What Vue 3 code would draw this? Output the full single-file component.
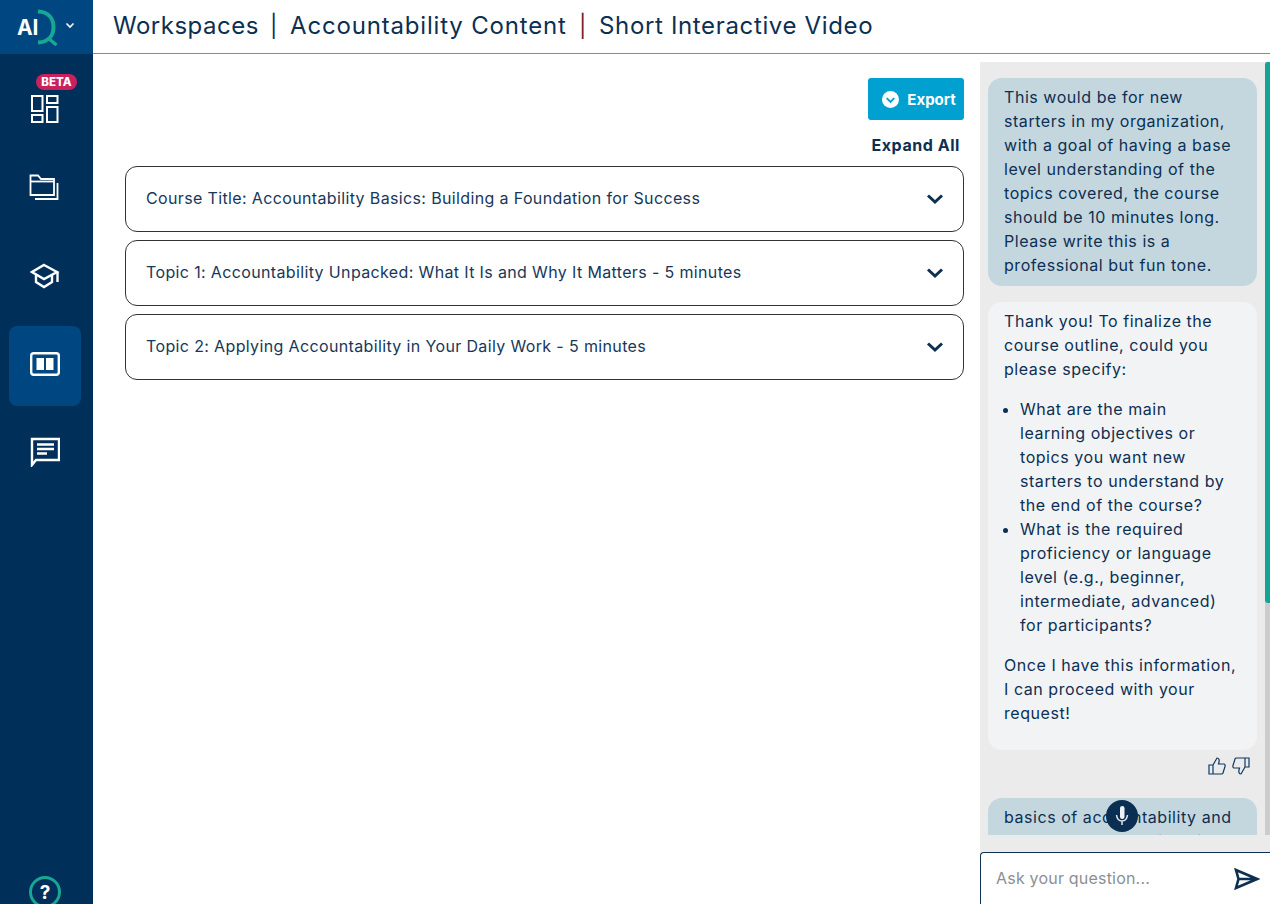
<script setup>
const items = [
  'Course Title: Accountability Basics: Building a Foundation for Success',
  'Topic 1: Accountability Unpacked: What It Is and Why It Matters - 5 minutes',
  'Topic 2: Applying Accountability in Your Daily Work - 5 minutes'
]
</script>

<template>
  <div class="app">
    <aside class="side">
      <div class="logo">
        <span class="ai">AI</span>
        <svg class="q" width="20" height="37" viewBox="0 0 20 37" fill="none">
          <path d="M0 2.500 C10 3 15.500 9 15.500 18 C15.500 27 10 33 0 33.500" stroke="#18a695" stroke-width="4"/>
          <path d="M10 29 L18.500 36" stroke="#18a695" stroke-width="3.500"/>
        </svg>
        <svg class="caret" width="10" height="7" viewBox="0 0 10 7" fill="none"><path d="M1.500 1.500 L5 5 L8.500 1.500" stroke="#fff" stroke-width="1.600"/></svg>
      </div>
      <nav class="nav">
        <div class="nav-item first">
          <span class="beta">BETA</span>
          <svg width="30" height="30" viewBox="0 0 30 30" fill="none" stroke="#fff" stroke-width="2">
            <rect x="2" y="2" width="10.500" height="15"/><rect x="17" y="2" width="10.500" height="7"/>
            <rect x="2" y="21" width="10.500" height="7"/><rect x="17" y="13" width="10.500" height="15"/>
          </svg>
        </div>
        <div class="nav-item">
          <svg class="up" width="32" height="28" viewBox="0 0 32 28" fill="none" stroke="#fff" stroke-width="1.800">
            <path d="M1.500 4 V1.500 H9 L12 5 H25 V21 H1.500 Z"/><path d="M1.500 7.500 H25"/><path d="M28.500 9 V25 H6"/>
          </svg>
        </div>
        <div class="nav-item">
          <svg class="up" width="30" height="26" viewBox="0 0 30 26" fill="none" stroke="#fff" stroke-width="2.400">
            <path d="M14 2 L27 9 L14 16 L2 9 Z"/><path d="M6 12 V19 L14 24 L22 19 V12"/><path d="M27.500 9 V19"/>
          </svg>
        </div>
        <div class="nav-item active">
          <svg class="up" width="30" height="24" viewBox="0 0 30 24" fill="none">
            <rect x="1.200" y="1.200" width="27.600" height="21.600" rx="2.500" stroke="#fff" stroke-width="2.400"/>
            <rect x="6.500" y="6" width="7.500" height="12" fill="#fff"/><rect x="16" y="6" width="7.500" height="12" fill="#fff"/>
          </svg>
        </div>
        <div class="nav-item">
          <svg class="up" width="30" height="30" viewBox="0 0 30 30" fill="none">
            <path d="M2 28 V2 H29 V23 H6 Z" stroke="#fff" stroke-width="2.400"/>
            <path d="M7 7.500 H24 M7 12 H24 M7 16.500 H17" stroke="#fff" stroke-width="2.400"/>
          </svg>
        </div>
      </nav>
      <div class="help">
        <span class="help-ring">?</span>
      </div>
    </aside>

    <div class="body">
      <header class="head">
        <span class="c1">Workspaces</span><span class="sep s1">|</span>
        <span class="c2">Accountability Content</span><span class="sep s2">|</span>
        <span class="c3">Short Interactive Video</span>
      </header>
      <div class="content">
        <main class="main">
          <div class="export-row">
            <button class="export">
              <svg width="17" height="17" viewBox="0 0 18 18"><circle cx="9" cy="9" r="9" fill="#fff"/><path d="M5 7.500 L9 11.500 L13 7.500" fill="none" stroke="#00a0d0" stroke-width="2"/></svg>
              Export
            </button>
          </div>
          <div class="expand">Expand All</div>
          <div class="list">
            <div v-for="t in items" :key="t" class="row">
              <span>{{ t }}</span>
              <svg width="18" height="12" viewBox="0 0 18 12" fill="none"><path d="M2 2.500 L9 9 L16 2.500" stroke="#0c2f52" stroke-width="3"/></svg>
            </div>
          </div>
        </main>

        <section class="chat">
          <div class="scroll">
            <div class="msgs">
              <div class="bubble user">This would be for new starters in my organization, with a goal of having a base level understanding of the topics covered, the course should be 10 minutes long. Please write this is a professional but fun tone.</div>
              <div class="bubble bot">
                <p>Thank you! To finalize the course outline, could you please specify:</p>
                <ul>
                  <li>What are the main learning objectives or topics you want new starters to understand by the end of the course?</li>
                  <li>What is the required proficiency or language level (e.g., beginner, intermediate, advanced) for participants?</li>
                </ul>
                <p>Once I have this information, I can proceed with your request!</p>
              </div>
              <div class="thumbs">
                <svg width="18" height="18" viewBox="0 0 18 18" fill="none" stroke="#0c3a63" stroke-width="1.200"><path d="M1 8 H5 V17 H1 Z M5 8 L9 1 C11 1 11.500 3 11 5 L10.500 7 H16 C17 7 17.300 8.500 17 9.500 L15 16 C14.800 16.700 14 17 13.500 17 H5"/></svg>
                <svg width="18" height="18" viewBox="0 0 18 18" fill="none" stroke="#0c3a63" stroke-width="1.200"><path d="M17 10 H13 V1 H17 Z M13 10 L9 17 C7 17 6.500 15 7 13 L7.500 11 H2 C1 11 .7 9.500 1 8.500 L3 2 C3.200 1.300 4 1 4.500 1 H13"/></svg>
              </div>
              <div class="bubble user">basics of accountability and how to apply them in daily</div>
            </div>
            <div class="bar"><div class="thumb"></div></div>
            <div class="mic">
              <svg width="16" height="20" viewBox="0 0 16 20" fill="none"><rect x="6" y="0" width="4.500" height="13" rx="2.200" fill="#eef2f6"/><path d="M2.500 9 C3 13 5 15 8 15 C11 15 13 13 13.500 9 M8 15 V19" stroke="#dfe6ee" stroke-width="1.500"/></svg>
            </div>
          </div>
          <div class="ask">
            <span class="ph">Ask your question...</span>
            <svg width="26" height="22" viewBox="0 0 26 22" fill="none" stroke="#0c2f52" stroke-width="2.600"><path d="M2 2 L23 11 L2 20 L4.500 11 Z M4.500 11 H23"/></svg>
          </div>
        </section>
      </div>
    </div>
  </div>
</template>

<style>
html, body { margin: 0; height: 100%; overflow: hidden; background: #fff; }
</style>

<style scoped>
.app { display: flex; width: 1270px; height: 904px; overflow: hidden; font-family: "Inter", "Noto Sans", sans-serif; color: #0c2f52; }
.side { width: 93px; flex: none; background: #002f5a; display: flex; flex-direction: column; color: #fff; overflow: hidden; }
.logo { height: 54px; flex: none; background: #004680; display: flex; align-items: center; padding-left: 17px; box-sizing: border-box; }
.ai { font-size: 21px; font-weight: 700; letter-spacing: -.3px; color: #fff; width: 21px; }
.caret { margin-left: 7px; margin-top: -3px; }
.nav { flex: 1; display: flex; flex-direction: column; align-items: flex-start; padding: 8px 0 0 9px; gap: 8px; }
.nav-item { position: relative; width: 72px; height: 80px; flex: none; display: flex; align-items: center; justify-content: center; border-radius: 8px; }
.nav-item.first svg { margin-top: 14px; }
.nav-item svg.up { margin-top: -4px; }
.nav-item.active { background: #004680; }
.beta { position: absolute; left: 27px; top: 12px; width: 41px; height: 16px; border-radius: 8px; background: #c8215e; color: #fff; font-size: 11.500px; font-weight: 800; display: flex; align-items: center; justify-content: center; letter-spacing: .1px; }
.help { height: 28px; flex: none; padding-left: 29px; }
.help-ring { box-sizing: border-box; width: 32px; height: 32px; border: 3px solid #18a695; border-radius: 50%; display: flex; align-items: center; justify-content: center; font-size: 19px; font-weight: 700; color: #fff; }
.body { flex: 1; min-width: 0; display: flex; flex-direction: column; }
.head { height: 54px; flex: none; box-sizing: border-box; border-bottom: 1px solid #8a8a8a; display: flex; align-items: center; padding: 0 0 2px 20px; font-size: 24px; font-weight: 400; letter-spacing: .5px; color: #0c2f52; white-space: nowrap; }
.c1 { width: 150px; }
.c2 { width: 281px; letter-spacing: .82px; }
.c3 { letter-spacing: .65px; }
.sep { width: 27px; box-sizing: border-box; font-size: 22px; padding-left: 7px; }
.s2 { color: #6d1f2b; width: 28px; padding-left: 8px; }
.content { flex: 1; min-height: 0; display: flex; }
.main { width: 887px; flex: none; box-sizing: border-box; padding: 24px 16px 0 32px; }
.export-row { display: flex; justify-content: flex-end; }
.export { width: 96px; height: 42px; border: 0; border-radius: 3px; background: #00a0d0; color: #fff; font: 700 15px "Inter", sans-serif; display: flex; align-items: center; justify-content: center; gap: 8px; padding: 0 0 0 6px; }
.expand { text-align: right; font-size: 16px; font-weight: 700; letter-spacing: .55px; margin-top: 15px; padding-right: 4px; line-height: 20px; }
.list { margin-top: 11px; display: flex; flex-direction: column; gap: 8px; }
.row { height: 66px; box-sizing: border-box; border: 1px solid #333; border-radius: 12px; display: flex; align-items: center; justify-content: space-between; padding: 0 19px 2px 20px; font-size: 16px; letter-spacing: .36px; color: #17375a; }
.row svg { margin-top: 2px; }
.chat { flex: 1; min-width: 0; margin-top: 8px; background: #ebebeb; display: flex; flex-direction: column; }
.scroll { position: relative; height: 773px; flex: none; overflow: hidden; }
.msgs { padding: 16px 13px 0 8px; font-size: 16px; letter-spacing: .55px; line-height: 24px; }
.bubble { border-radius: 14px; padding: 7px 16px 9px; color: #0c2f52; }
.user { background: #c4d7de; }
.bot { background: #f2f3f5; margin-top: 16px; padding-bottom: 25px; }
.bot p { margin: 0; }
.bot ul { margin: 16px 0; padding: 0 10px 0 16px; }
.thumbs { display: flex; justify-content: flex-end; gap: 6px; padding-right: 7px; margin-top: 7px; height: 18px; margin-bottom: 23px; }
.bar { position: absolute; top: 0; right: 0; bottom: 0; width: 5px; background: #cccccc; }
.thumb { height: 541px; background: #13a594; border-radius: 3px 0 0 3px; }
.mic { position: absolute; left: 126px; top: 738px; width: 32px; height: 32px; border-radius: 50%; background: #0a2f52; display: flex; align-items: center; justify-content: center; }
.ask { flex: 1; margin-top: 17px; box-sizing: border-box; background: #fff; border: 1px solid #0c2f52; border-right: 0; border-bottom: 0; border-radius: 4px 0 0 0; display: flex; align-items: center; justify-content: space-between; padding: 0 10px 0 15px; }
.ask .ph { margin-bottom: 2px; }
.ph { font-size: 16px; letter-spacing: .2px; color: #8b8f95; }
</style>
